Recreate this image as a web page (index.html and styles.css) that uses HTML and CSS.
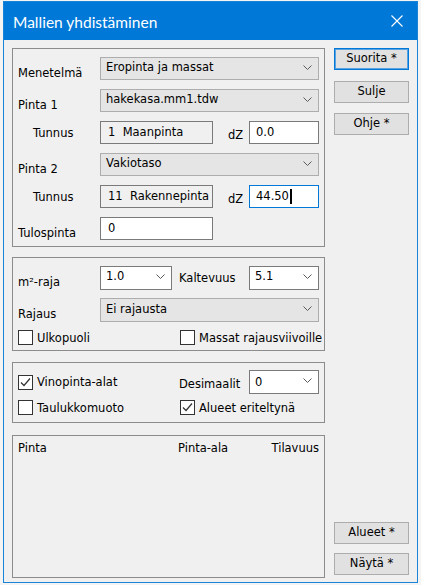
FILE: index.html
```html
<!doctype html>
<html lang="fi">
  <head>
    <meta charset="UTF-8" />
    <meta name="viewport" content="width=device-width, initial-scale=1.0" />
    <title>Mallien yhdistäminen</title>
    <link rel="stylesheet" href="styles.css">
  </head>
  <body>
    <div class="window">
      <div class="titlebar">
        <span class="title">Mallien yhdistäminen</span>
        <svg class="close" width="12" height="12" viewBox="0 0 12 12">
          <path d="M0.5 0.5 L11.5 11.5 M11.5 0.5 L0.5 11.5" />
        </svg>
      </div>

      <div class="client">
        <div class="main">
          <!-- pinnat -->
          <div class="group g1">
            <div class="row">
              <span class="lbl low">Menetelmä</span>
              <div class="combo grey fill">
                <span>Eropinta ja massat</span>
                <svg class="chev" width="9" height="5" viewBox="0 0 9 5"><path d="M0.5 0.5 L4.5 4.5 L8.5 0.5" /></svg>
              </div>
            </div>
            <div class="row">
              <span class="lbl low">Pinta 1</span>
              <div class="combo grey fill">
                <span>hakekasa.mm1.tdw</span>
                <svg class="chev" width="9" height="5" viewBox="0 0 9 5"><path d="M0.5 0.5 L4.5 4.5 L8.5 0.5" /></svg>
              </div>
            </div>
            <div class="row">
              <span class="lbl indent">Tunnus</span>
              <div class="field readonly tunnus">1  Maanpinta</div>
              <span class="dz">dZ</span>
              <div class="field small">0.0</div>
            </div>
            <div class="row">
              <span class="lbl low">Pinta 2</span>
              <div class="combo grey fill">
                <span>Vakiotaso</span>
                <svg class="chev" width="9" height="5" viewBox="0 0 9 5"><path d="M0.5 0.5 L4.5 4.5 L8.5 0.5" /></svg>
              </div>
            </div>
            <div class="row">
              <span class="lbl indent">Tunnus</span>
              <div class="field readonly tunnus">11  Rakennepinta</div>
              <span class="dz">dZ</span>
              <div class="field small focus">44.50<span class="caret"></span></div>
            </div>
            <div class="row">
              <span class="lbl low">Tulospinta</span>
              <div class="field tunnus">0</div>
            </div>
          </div>

          <!-- rajaus -->
          <div class="group g2">
            <div class="row tall">
              <span class="lbl low2">m²-raja</span>
              <div class="combo white narrow">
                <span>1.0</span>
                <svg class="chev" width="9" height="5" viewBox="0 0 9 5"><path d="M0.5 0.5 L4.5 4.5 L8.5 0.5" /></svg>
              </div>
              <span class="lbl2 low2">Kaltevuus</span>
              <div class="combo white small">
                <span>5.1</span>
                <svg class="chev" width="9" height="5" viewBox="0 0 9 5"><path d="M0.5 0.5 L4.5 4.5 L8.5 0.5" /></svg>
              </div>
            </div>
            <div class="row tall">
              <span class="lbl low2">Rajaus</span>
              <div class="combo grey fill">
                <span>Ei rajausta</span>
                <svg class="chev" width="9" height="5" viewBox="0 0 9 5"><path d="M0.5 0.5 L4.5 4.5 L8.5 0.5" /></svg>
              </div>
            </div>
            <div class="checks">
              <label class="check"><span class="box"></span>Ulkopuoli</label>
              <label class="check"><span class="box"></span>Massat rajausviivoille</label>
            </div>
          </div>

          <!-- tulostus -->
          <div class="group g3">
            <div class="checks top">
              <label class="check"><span class="box"><svg width="13" height="13" viewBox="0 0 13 13"><path d="M2 6.5 L5 9.5 L11 2.5" /></svg></span>Vinopinta-alat</label>
              <div class="desim">
                <span>Desimaalit</span>
                <div class="combo white small">
                  <span>0</span>
                  <svg class="chev" width="9" height="5" viewBox="0 0 9 5"><path d="M0.5 0.5 L4.5 4.5 L8.5 0.5" /></svg>
                </div>
              </div>
            </div>
            <div class="checks">
              <label class="check"><span class="box"></span>Taulukkomuoto</label>
              <label class="check"><span class="box"><svg width="13" height="13" viewBox="0 0 13 13"><path d="M2 6.5 L5 9.5 L11 2.5" /></svg></span>Alueet eriteltynä</label>
            </div>
          </div>

          <!-- tulokset -->
          <div class="group g4">
            <div class="list-head">
              <span class="c-pinta">Pinta</span>
              <span class="c-ala">Pinta-ala</span>
              <span class="c-til">Tilavuus</span>
            </div>
          </div>
        </div>

        <div class="side">
          <button class="btn default">Suorita *</button>
          <button class="btn">Sulje</button>
          <button class="btn">Ohje *</button>
          <div class="spacer"></div>
          <button class="btn">Alueet *</button>
          <button class="btn">Näytä *</button>
        </div>
      </div>
    </div>
  </body>
</html>
```

FILE: styles.css
```css
body {
  margin: 0;
  background: #f4f4f4;
  font-family: "DejaVu Sans", Verdana, sans-serif;
  font-size: 11.5px;
  color: #000;
}

.window {
  box-sizing: border-box;
  width: 415px;
  height: 582px;
  margin: 1px 0 0 3px;
  border: 1px solid #1883d7;
  background: #f0f0f0;
  display: flex;
  flex-direction: column;
}

.titlebar {
  height: 38px;
  flex: none;
  background: #0078d7;
  display: flex;
  align-items: center;
  justify-content: space-between;
  padding: 0 14px 0 9px;
  color: #fff;
}

.title {
  font-family: Lato, "Noto Sans", sans-serif;
  font-size: 15.5px;
  margin-top: 1px;
}

.close path {
  stroke: #fff;
  stroke-width: 1.1;
  fill: none;
}

.client {
  flex: 1;
  display: flex;
  gap: 9px;
  padding: 8px 8px 4px 8px;
  min-height: 0;
}

.main {
  width: 313px;
  display: flex;
  flex-direction: column;
}

.group {
  border: 1px solid #8c8c8c;
  padding: 8px 5px 6px 5px;
}

.g1 {
  display: flex;
  flex-direction: column;
  gap: 9px;
  margin-bottom: 10px;
}

.g2 {
  display: flex;
  flex-direction: column;
  gap: 8px;
  padding-bottom: 5px;
  margin-bottom: 11px;
}

.g3 {
  padding: 7px 5px 7px 5px;
  margin-bottom: 12px;
}

.g4 {
  flex: 1;
  padding-top: 4px;
}

.row {
  display: flex;
  height: 23px;
}

.row.tall {
  height: 24px;
}

.lbl {
  width: 82px;
  flex: none;
  display: flex;
  align-items: center;
  box-sizing: border-box;
}

.lbl.low {
  padding-top: 9px;
}

.lbl.low2 {
  padding-top: 7px;
}

.lbl.indent {
  padding-left: 15px;
}

.lbl2 {
  display: flex;
  align-items: center;
  margin-left: 7px;
}

.combo {
  box-sizing: border-box;
  display: flex;
  align-items: center;
  justify-content: space-between;
  padding: 0 6px 3px 5px;
  border: 1px solid #adadad;
}

.combo.grey {
  background: #e5e5e5;
}

.combo.white {
  background: #fff;
  border-color: #7a7a7a;
  padding-bottom: 4px;
}

.combo.fill {
  flex: 1;
}

.combo.narrow {
  width: 72px;
}

.combo.small,
.field.small {
  width: 70px;
  margin-left: auto;
}

.chev path {
  stroke: #5a5a5a;
  stroke-width: 1;
  fill: none;
}

.field {
  box-sizing: border-box;
  display: flex;
  align-items: center;
  padding: 0 2px 1px 7px;
  border: 1px solid #7a7a7a;
  background: #fff;
  white-space: pre;
}

.field.readonly {
  background: #f0f0f0;
}

.field.tunnus {
  width: 113px;
}

.field.small {
  padding-left: 6px;
}

.field.focus {
  border-color: #0078d7;
}

.caret {
  display: inline-block;
  width: 2px;
  height: 15px;
  margin-left: 1px;
  background: #000;
}

.dz {
  display: flex;
  align-items: center;
  padding-top: 4px;
  margin-left: 15px;
}

.checks {
  display: grid;
  grid-template-columns: 162px 1fr;
  height: 15px;
  align-items: center;
}

.checks.top {
  height: 24px;
  margin-bottom: 6px;
  grid-template-columns: 161px 1fr;
}

.check {
  display: flex;
  align-items: center;
  gap: 4px;
  white-space: nowrap;
}

.box {
  width: 15px;
  height: 15px;
  box-sizing: border-box;
  border: 1px solid #333;
  background: #fff;
  display: flex;
  align-items: center;
  justify-content: center;
}

.box path {
  stroke: #333;
  stroke-width: 1.2;
  fill: none;
}

.desim {
  display: flex;
  align-items: center;
  height: 24px;
}

.desim span:first-child {
  padding-top: 3px;
}

.desim .combo {
  height: 24px;
}

.list-head {
  display: flex;
  height: 16px;
  align-items: center;
}

.c-pinta {
  width: 160px;
}

.c-til {
  margin-left: auto;
}

.side {
  width: 75px;
  display: flex;
  flex-direction: column;
  padding-bottom: 3px;
}

.btn {
  box-sizing: border-box;
  height: 22px;
  width: 75px;
  flex: none;
  border: 1px solid #adadad;
  background: #e1e1e1;
  font-family: "DejaVu Sans", Verdana, sans-serif;
  font-size: 11.5px;
  color: #000;
  padding: 0 0 2px;
  margin-bottom: 10px;
}

.btn.default {
  border-color: #0078d7;
  box-shadow: inset 0 0 0 1px #5aa3e0;
  margin-bottom: 11px;
}

.btn:last-child {
  margin-bottom: 0;
}

.spacer {
  flex: 1;
}

.side .spacer + .btn {
  margin-bottom: 9px;
}
```
